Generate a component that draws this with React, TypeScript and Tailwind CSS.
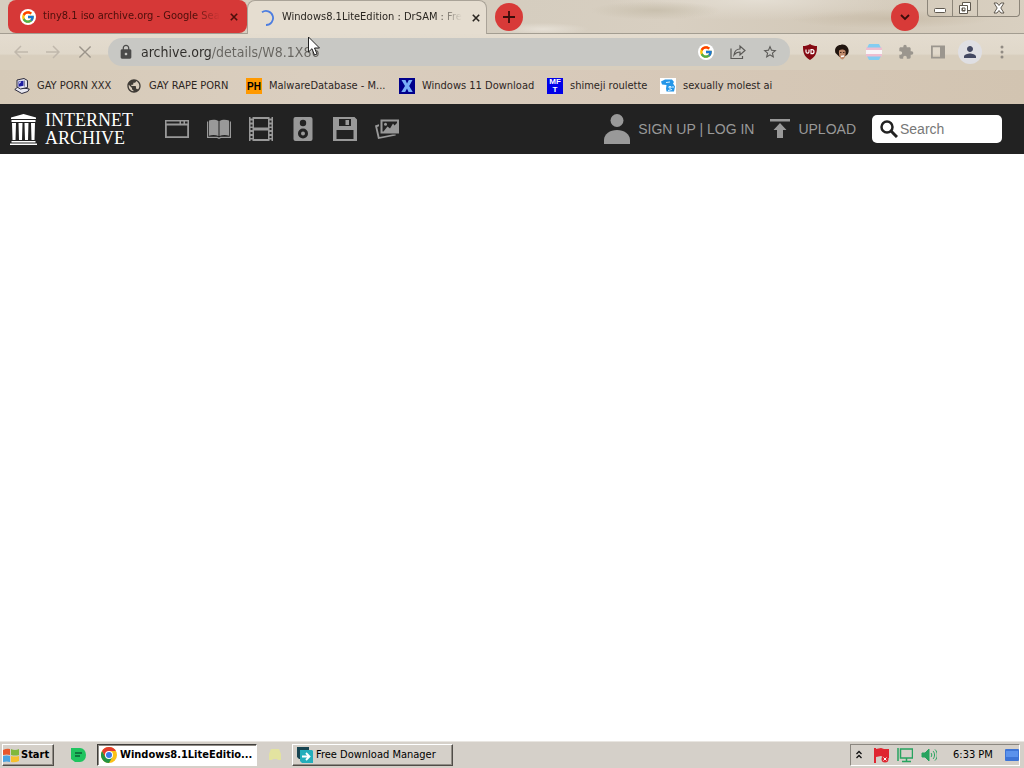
import type { ReactNode } from "react";
import { FcGoogle } from "react-icons/fc";
import { MdExtension, MdLock, MdPerson, MdStarBorder, MdPublic } from "react-icons/md";

type Bookmark = { label: string; icon: ReactNode; width: string };

function GoogleBadge() {
  return (
    <span className="flex size-4 shrink-0 items-center justify-center rounded-full bg-white">
      <FcGoogle className="size-3.5" />
    </span>
  );
}

function Cross({ className }: { className: string }) {
  return (
    <svg viewBox="0 0 10 10" className={className} fill="none" stroke="currentColor">
      <path d="M1 1l8 8M9 1L1 9" />
    </svg>
  );
}

function PcIcon() {
  return (
    <svg viewBox="0 0 16 16" className="size-4" stroke="#17172c" strokeWidth="0.9" strokeLinejoin="round">
      <path d="M.8 11.500l3-2.500 11.500 2-1.500 2.500-6 2z" fill="#e8e8f0" />
      <path d="M3 2l7-1.500 3.500 2v7l-7 1.500L3 9z" fill="#e2e2ee" />
      <path d="M4.500 3.500l5-.8v5l-5 1z" fill="#1d1da0" stroke="none" />
      <path d="M5.500 5.500v-1.200l1.500-.3" stroke="#fff" fill="none" />
      <path d="M10.500 2.500v6" stroke="#77779a" />
    </svg>
  );
}

function PhIcon() {
  return (
    <span className="flex size-4 items-center justify-center bg-[#ff9900] font-['Liberation_Sans',sans-serif] text-[10px] font-bold text-black">
      PH
    </span>
  );
}

function XIcon() {
  return (
    <svg viewBox="0 0 16 16" className="size-4">
      <path d="M0 0h16v16H0z" fill="#00008c" />
      <path d="M2.500 2h4L8 5.500 9.800 2H13.500L10.200 8l3.500 6H9.500L8 10.500 6.200 14H2.300L6 8z" fill="#78aef8" />
    </svg>
  );
}

function MftIcon() {
  return (
    <span className="flex size-4 flex-col items-center justify-center bg-[#0000e8] font-['Liberation_Sans',sans-serif] text-[8px] leading-[8px] font-bold text-white">
      <span>MF</span>
      <span>T</span>
    </span>
  );
}

function BlueFaceIcon() {
  return (
    <svg viewBox="0 0 16 16" className="size-4">
      <path d="M0 0h16v16H0z" fill="#fff" />
      <path d="M1 3.500l4-2h7l2 2.500-1 1.500 2 3-1 5H6.500L6 10.500 6.500 7 2 6.500z" fill="#2496e8" />
      <path d="M6 4.500l4-.5M9 8.500h2V10H9zM13 8v2M8 12.500l4-1" stroke="#d7f0ff" fill="none" />
    </svg>
  );
}

const bookmarks: Bookmark[] = [
  { label: "GAY PORN XXX", icon: <PcIcon />, width: "w-24" },
  { label: "GAY RAPE PORN", icon: <MdPublic className="size-4 text-[#3f3b36]" />, width: "w-26" },
  { label: "MalwareDatabase - M...", icon: <PhIcon />, width: "w-[137px]" },
  { label: "Windows 11 Download", icon: <XIcon />, width: "w-33" },
  { label: "shimeji roulette", icon: <MftIcon />, width: "w-[97px]" },
  { label: "sexually molest ai", icon: <BlueFaceIcon />, width: "w-28" },
];

const mediaIcons: { name: string; drawing: ReactNode }[] = [
  {
    name: "Web",
    drawing: (
      <path fillRule="evenodd" d="M0 3h24v18H0zM1.500 4.500v2h13v-2zM16 4.500v2h2.500v-2zM20 4.500v2h2.500v-2zM1.800 8.500v10.700h20.400V8.500z" />
    ),
  },
  {
    name: "Texts",
    drawing: (
      <path d="M2 3.500c3-1 7-1 9.500.5v15c-3-1.300-6.500-1.300-9.500-.3zM22 3.500c-3-1-7-1-9.500.5v15c3-1.300 6.500-1.300 9.500-.3zM0 4.500h1.200v15.300h9.300l1.500.8 1.500-.8h9.300V4.500H24V21H14l-2 1-2-1H0z" />
    ),
  },
  {
    name: "Video",
    drawing: (
      <path
        fillRule="evenodd"
        d="M0 0h1.500v1.500h2V0h17v1.500h2V0H24v24h-1.500v-1.500h-2V24h-17v-1.500h-2V24H0zM5 2v8.500h14V2zM5 13.500V22h14v-8.500zM1.500 3.500v2h2v-2zM1.500 7.500v2h2v-2zM1.500 11v2h2v-2zM1.500 15v2h2v-2zM1.500 19v2h2v-2zM20.500 3.500v2h2v-2zM20.500 7.500v2h2v-2zM20.500 11v2h2v-2zM20.500 15v2h2v-2zM20.500 19v2h2v-2z"
      />
    ),
  },
  {
    name: "Audio",
    drawing: (
      <>
        <rect x="2.500" width="19" height="24" rx="2" />
        <g fill="#222">
          <circle cx="12" cy="6" r="3.200" />
          <circle cx="12" cy="16.500" r="5" />
        </g>
        <circle cx="12" cy="16.500" r="2" />
      </>
    ),
  },
  {
    name: "Software",
    drawing: (
      <path fillRule="evenodd" d="M0 0h21.500L24 2.500V24H0zM6 2v7h12V2zM12.500 3H16v5h-3.500zM3.500 13v9h17v-9z" />
    ),
  },
  {
    name: "Images",
    drawing: (
      <>
        <path d="M0 8.500l4-1.200v2L2.200 10l2.300 10 13-2.500h3.200v1L3 22z" />
        <path fillRule="evenodd" d="M5.500 2.500H24v14H5.500zM7.500 4.500v10h1l4-5 2.500 2 3-5 1.500 2L22 6V4.500z" />
        <circle cx="10.500" cy="7.300" r="1.500" />
      </>
    ),
  },
];

function ChromeLogo() {
  return (
    <svg viewBox="0 0 16 16" className="size-4 shrink-0">
      <circle cx="8" cy="8" r="8" fill="#fbc116" />
      <path d="M1.070 4A8 8 0 0114.930 4H8z" fill="#e33b2e" />
      <path d="M1.070 4A8 8 0 008 16l3.500-6L8 8 4.500 10z" fill="#229342" />
      <path d="M1.070 4L4.500 10 8 8l2-4z" fill="#e33b2e" />
      <circle cx="8" cy="8" r="4" fill="#fff" />
      <circle cx="8" cy="8" r="3" fill="#3b78e7" />
    </svg>
  );
}

function TabStrip() {
  return (
    <div className="flex h-[34px] items-start border-b border-[#a39d91] pl-2">
      <div className="flex h-[33px] w-[239px] items-center rounded-lg bg-[#d63837] pr-2.5 pl-3">
        <GoogleBadge />
        <span className="ml-[7px] flex-1 mask-r-from-85% whitespace-nowrap text-[#4b0f0b]">
          tiny8.1 iso archive.org - Google Sea
        </span>
        <button aria-label="Close tab" className="ml-2 p-0.5 text-[#4b0f0b]">
          <Cross className="size-2 stroke-2" />
        </button>
      </div>
      <div className="flex h-[34px] w-60 items-center rounded-t-lg border border-b-0 border-[#aaa398] bg-[#e5ddd0] pr-2.5 pl-2.5">
        <svg viewBox="0 0 16 16" className="size-4 shrink-0" fill="none" stroke="#4c7de0" strokeWidth="1.800">
          <path d="M4 2.300A7 7 0 118 15" />
        </svg>
        <span className="ml-2 flex-1 mask-r-from-85% whitespace-nowrap text-[#292520]">
          Windows8.1LiteEdition : DrSAM : Fre
        </span>
        <button aria-label="Close tab" className="ml-2 p-0.5 text-[#292520]">
          <Cross className="size-2 stroke-2" />
        </button>
      </div>
      <button
        aria-label="New tab"
        className="mt-[3px] ml-2 flex size-7 items-center justify-center rounded-full bg-[#d83a38] text-[#3a0d0a]"
      >
        <svg viewBox="0 0 12 12" className="size-3" stroke="currentColor" strokeWidth="1.800">
          <path d="M6 0v12M0 6h12" />
        </svg>
      </button>
      <button
        aria-label="Search tabs"
        className="mt-[3px] ml-auto flex size-7 items-center justify-center rounded-full bg-[#d83a38] text-[#3a0d0a]"
      >
        <svg viewBox="0 0 12 12" className="size-3" fill="none" stroke="currentColor" strokeWidth="1.800">
          <path d="M2 4l4 4 4-4" />
        </svg>
      </button>
      <div className="mr-1 ml-2 flex h-[17px] divide-x divide-[#8c8579] rounded-b border border-t-0 border-[#8c8579] text-[#5e584f]">
        <button aria-label="Minimize" className="flex w-[25px] items-end justify-center pb-[3px]">
          <svg viewBox="0 0 12 5" className="h-[5px] w-3" fill="#fff" stroke="currentColor">
            <rect x=".5" y=".5" width="11" height="4" rx="1" />
          </svg>
        </button>
        <button aria-label="Restore" className="flex w-[25px] items-center justify-center">
          <svg viewBox="0 0 14 14" className="size-3.5" fill="#fff" stroke="currentColor">
            <path d="M4.500 1.500h8v8h-8z" />
            <path fillRule="evenodd" d="M1.500 4.500h8v8h-8zM4 7v3h3V7z" />
          </svg>
        </button>
        <button aria-label="Close" className="flex w-[41px] items-center justify-center">
          <svg viewBox="0 0 12 12" className="size-3" fill="#fff" stroke="currentColor">
            <path d="M1 1h3l2 2.500L8 1h3L7.800 6 11 11H8L6 8.500 4 11H1l3.200-5z" />
          </svg>
        </button>
      </div>
    </div>
  );
}

function Toolbar() {
  return (
    <div className="flex h-9 items-center bg-[linear-gradient(#e4dccf_0%,#e0d8ca_55%,#d8cebd_60%,#d8cebd_100%)] px-3.5">
      <div className="flex gap-[18px]">
        <button aria-label="Back" className="text-[#c0b8ac]">
          <svg viewBox="0 0 14 14" className="size-3.5" fill="none" stroke="currentColor" strokeWidth="1.500">
            <path d="M14 7H1M7 1L1 7l6 6" />
          </svg>
        </button>
        <button aria-label="Forward" className="text-[#c0b8ac]">
          <svg viewBox="0 0 14 14" className="size-3.5" fill="none" stroke="currentColor" strokeWidth="1.500">
            <path d="M0 7h13M7 1l6 6-6 6" />
          </svg>
        </button>
        <button aria-label="Stop" className="text-[#9b948a]">
          <Cross className="size-3.5 stroke-1" />
        </button>
      </div>
      <div className="ml-4 flex h-7 flex-1 items-center rounded-full bg-[#c8c8c4] pr-3 pl-2.5">
        <label htmlFor="address" className="shrink-0">
          <MdLock className="size-4 text-[#4b4b4a]" />
          <span className="sr-only">Address</span>
        </label>
        <input
          id="address"
          type="text"
          defaultValue="archive.org/details/W8.1X86"
          className="ml-[7px] min-w-0 flex-1 bg-[linear-gradient(90deg,#2f2d2a_71px,#66645f_71px)] bg-clip-text text-[14px] text-transparent outline-none"
        />
        <div className="flex gap-4 text-[#5b5a57]">
          <button aria-label="Google">
            <GoogleBadge />
          </button>
          <button aria-label="Share">
            <svg viewBox="0 0 16 16" className="size-4" fill="none" stroke="currentColor" strokeWidth="1.200">
              <path d="M1 4.500v10h11.500V12M4 11c.5-4 3-6 6-6V2l5 4.500-5 4.500V8c-3 0-4.500 1-6 3z" />
            </svg>
          </button>
          <button aria-label="Bookmark this page">
            <MdStarBorder className="size-4" />
          </button>
        </div>
      </div>
      <div className="ml-3 flex shrink-0 items-center gap-4">
        <button aria-label="Ad blocker">
          <svg viewBox="0 0 16 16" className="size-4">
            <path d="M8 0c2 1.500 4.500 2 7 2 0 6-.5 10-7 14C1.500 12 1 8 1 2c2.500 0 5-.5 7-2z" fill="#850a13" />
            <path d="M4 5.500v2.200a1.500 1.500 0 003 0V5.500M9 5.700h1a2 2 0 010 4H9z" fill="none" stroke="#fff" strokeWidth="1.200" />
          </svg>
        </button>
        <button aria-label="Portrait extension">
          <svg viewBox="0 0 16 16" className="size-4">
            <path d="M1.500 9C0 5 2.500 1 6.500 1c5-2 9 3 8 7-.5 3-2 3-3 4l-6 1z" fill="#21150f" />
            <path d="M5 6.500c2-1.500 5-1.500 6.500.5.5 4-.5 7.500-3 8.500-2.500 0-4-4-3.500-9z" fill="#c08a6b" />
            <path d="M6 8.500h1.500M9 8.500h1.500" stroke="#4b2a1e" />
            <path d="M7 12.500l3-.5" stroke="#fff" strokeWidth="1.300" />
          </svg>
        </button>
        <button aria-label="Striped extension">
          <svg viewBox="0 0 16 16" className="size-4">
            <path d="M3 0h10l2 4H1zM1 12h14l-2 4H3z" fill="#83cdf1" />
            <path d="M0 3.500h16V6H0zM0 10h16v2.500H0z" fill="#eebed0" />
            <path d="M0 6h16v4H0z" fill="#f8f5f7" />
          </svg>
        </button>
        <button aria-label="Extensions">
          <MdExtension className="size-4 text-[#9b968e]" />
        </button>
        <button aria-label="Side panel">
          <svg viewBox="0 0 16 16" className="size-4">
            <path fillRule="evenodd" d="M1 1.500h14v13H1zM2.800 3.300v9.400H10V3.300z" fill="#9b968e" />
          </svg>
        </button>
        <button aria-label="Profile" className="-mx-1 flex size-6 items-center justify-center rounded-full bg-[#dfdfe3]">
          <MdPerson className="size-[18px] text-[#434862]" />
        </button>
        <button aria-label="Menu">
          <svg viewBox="0 0 16 16" className="size-4" fill="#918b83">
            <circle cx="8" cy="3" r="1.500" />
            <circle cx="8" cy="8" r="1.500" />
            <circle cx="8" cy="13" r="1.500" />
          </svg>
        </button>
      </div>
    </div>
  );
}

function BookmarksBar() {
  return (
    <nav
      aria-label="Bookmarks"
      className="flex h-[34px] items-center gap-4 bg-[linear-gradient(90deg,#d6cab8,#dacebf_30%,#d7c9b9_60%,#d2c4b1)] pb-0.5 pl-3.5"
    >
      {bookmarks.map((b) => (
        <a key={b.label} href="#" className={`flex items-center gap-[7px] whitespace-nowrap text-[#2d261f] ${b.width}`}>
          <span className="size-4 shrink-0">{b.icon}</span>
          {b.label}
        </a>
      ))}
    </nav>
  );
}

function ArchiveNav() {
  return (
    <header className="flex h-[50px] items-center bg-[#222] pr-[22px] pl-2.5 font-['Liberation_Sans',sans-serif] text-[14px] text-[#999]">
      <a href="#" className="flex items-center gap-2 text-white">
        <svg viewBox="0 0 27 31" className="h-[31px] w-[27px]" fill="currentColor">
          <path d="M13.500 0L26 3.500V5H1V3.500zM1.500 6h24v2h-24zM2 9h4l-.5 17h-3zM8.500 9h4L12 26H9zM14.500 9h4L18 26h-3zM21 9h4l-.5 17h-3zM1.500 27h24v1.500h-24zM0 29.500h27V31H0z" />
        </svg>
        <span className="flex flex-col font-['Liberation_Serif',serif] text-[18px] leading-[18px]">
          <span>INTERNET</span>
          <span>ARCHIVE</span>
        </span>
      </a>
      <nav aria-label="Media types" className="ml-8 flex gap-[18px]">
        {mediaIcons.map((m) => (
          <a key={m.name} href="#" aria-label={m.name}>
            <svg viewBox="0 0 24 24" className="size-6" fill="#999">
              {m.drawing}
            </svg>
          </a>
        ))}
      </nav>
      <div className="ml-auto flex items-center">
        <a href="#" className="flex items-center">
          <svg viewBox="0 0 26 30" className="mr-2 h-[30px] w-[26px]" fill="#999">
            <circle cx="13" cy="6.500" r="6.500" />
            <path d="M0 30v-4c0-6 6-10 13-10s13 4 13 10v4z" />
          </svg>
          SIGN UP | LOG IN
        </a>
        <a href="#" className="ml-4 flex items-center">
          <svg viewBox="0 0 20 20" className="mr-2 size-5" fill="#999">
            <path d="M0 0h20v2.500H0zM10 4l6.500 7H13v8H7v-8H3.500z" />
          </svg>
          UPLOAD
        </a>
        <label className="ml-4 flex h-7 w-[130px] items-center rounded-[5px] bg-white pl-2">
          <span className="sr-only">Search</span>
          <svg viewBox="0 0 18 18" className="size-[18px] shrink-0" fill="none" stroke="#222">
            <circle cx="7" cy="7" r="5.500" strokeWidth="2.500" />
            <path d="M11 11l6 6" strokeWidth="3" />
          </svg>
          <input
            type="search"
            placeholder="Search"
            className="ml-0.5 w-full min-w-0 text-[14px] outline-none placeholder:text-[#777]"
          />
        </label>
      </div>
    </header>
  );
}

function Taskbar() {
  const raised =
    "border border-t-white border-l-white border-r-[#504d48] border-b-[#504d48] shadow-[inset_-1px_-1px_#918d86]";
  return (
    <footer className="flex h-[27px] items-center border-t border-[#e9e6e1] bg-[#d5d0c9] px-0.5 text-black">
      <button className={`flex h-[22px] w-[52px] items-center gap-0.5 font-bold ${raised}`}>
        <svg viewBox="0 0 16 16" className="size-4 shrink-0">
          <path d="M0 3q4-2 7-1v6q-3-1-7 0z" fill="#e8572b" />
          <path d="M8 2q4 2 8 0v6q-4 1-8 0z" fill="#7fb83c" />
          <path d="M0 9q4-1 7 0v6q-3-1-7 0z" fill="#4aa3e0" />
          <path d="M8 9q4 1 8 0v5q-4 2-8 1z" fill="#f6c02c" />
        </svg>
        Start
      </button>
      <button aria-label="Notes" className="ml-[17px]">
        <svg viewBox="0 0 15 14" className="h-3.5 w-[15px]">
          <path d="M0 0h9a6 7 0 010 14H4L0 11z" fill="#1fc45f" />
          <path d="M4 5h7M4 8h5" stroke="#0b5f34" strokeWidth="1.500" />
        </svg>
      </button>
      <button className="ml-[11px] flex h-[22px] w-40 items-center gap-[3px] border border-t-[#3f3d3a] border-r-white border-b-white border-l-[#3f3d3a] bg-white pl-[3px] font-bold whitespace-nowrap shadow-[inset_1px_1px_#8f8b85]">
        <ChromeLogo />
        Windows8.1LiteEditio...
      </button>
      <button aria-label="Assistant" className="ml-[11px]">
        <svg viewBox="0 0 14 14" className="size-3.5" fill="#e3e3a0">
          <path d="M3 1h8l2 5v6h-3l-1-1H5l-1 1H1V6z" />
        </svg>
      </button>
      <button className={`ml-2.5 flex h-[22px] w-[161px] items-center gap-[3px] pl-1 whitespace-nowrap ${raised}`}>
        <svg viewBox="0 0 16 16" className="size-4 shrink-0">
          <path d="M0 0h12v3H4v9H2L0 10z" fill="#174451" />
          <path d="M3 3h12l1 1v12H5l-2-2z" fill="#24aebb" />
          <path d="M5 9.500h7M9 6l3.500 3.500L9 13" fill="none" stroke="#fff" strokeWidth="1.800" />
        </svg>
        Free Download Manager
      </button>
      <div className="mr-0.5 ml-auto flex h-[22px] w-[170px] items-center border border-t-[#8b8780] border-r-white border-b-white border-l-[#8b8780] pl-1">
        <button aria-label="Show hidden icons">
          <svg viewBox="0 0 8 10" className="h-2.5 w-2" fill="none" stroke="#111" strokeWidth="1.300">
            <path d="M1.500 4L4 1.500 6.500 4M1.500 8L4 5.500 6.500 8" />
          </svg>
        </button>
        <svg viewBox="0 0 16 16" className="ml-2.5 size-4 shrink-0">
          <path d="M1 1h2v15H1zM3 2l5-1 3 1h5v9h-4L8 9 3 10z" fill="#df2631" />
          <circle cx="12" cy="12" r="3.500" fill="#df2631" />
          <path d="M10.500 10.500l3 3M13.500 10.500l-3 3" stroke="#fff" />
        </svg>
        <svg viewBox="0 0 16 16" className="ml-2 size-4 shrink-0" fill="none" stroke="#27a35f" strokeWidth="1.500">
          <path d="M3.500 2h12v9h-12zM9.500 11v3M5 14.500h9M1 1v5M1 6v8" />
        </svg>
        <svg viewBox="0 0 16 14" className="ml-2 h-3.5 w-4 shrink-0" fill="#27a35f" stroke="#27a35f">
          <path d="M1 5h3l4-4v12L4 9H1z" />
          <path d="M10 5c1 1 1 3 0 4M12 3c2 2 2 6 0 8M14 1.500c3 3 3 8 0 11" fill="none" />
        </svg>
        <span className="ml-4 flex-1 whitespace-nowrap">6:33 PM</span>
        <svg viewBox="0 0 14 12" className="h-3 w-3.5 shrink-0">
          <rect width="14" height="12" rx="1" fill="#3d74d6" />
          <path d="M1 2h12v6H1z" fill="#5b92ec" />
        </svg>
      </div>
    </footer>
  );
}

export default function App() {
  return (
    <div className="relative flex min-h-screen flex-col bg-white font-['DejaVu_Sans_Condensed','DejaVu_Sans',sans-serif] text-[11px]">
      <div className="bg-[radial-gradient(ellipse_at_64%_10%,#c9c0ae_0%,transparent_7%),radial-gradient(ellipse_at_74%_0%,#e4ded3_0%,transparent_14%),radial-gradient(ellipse_at_53%_28%,#e6e0d6_0%,transparent_6%),radial-gradient(ellipse_at_87%_18%,#c9bdaa_0%,transparent_8%),linear-gradient(100deg,#d6cebf,#d5cdbf_50%,#d8cfc1_65%,#d3c9b9_80%,#d9d0c1)]">
        <TabStrip />
        <Toolbar />
        <BookmarksBar />
      </div>
      <ArchiveNav />
      <main className="flex-1 bg-white" />
      <Taskbar />
      <svg viewBox="0 0 12 20" className="pointer-events-none absolute top-9 left-[308px] h-5 w-3" fill="#fff" stroke="#222">
        <path d="M.5 1v15l3.500-3.300L6.500 19l2.500-1-2.500-6h5z" />
      </svg>
    </div>
  );
}
